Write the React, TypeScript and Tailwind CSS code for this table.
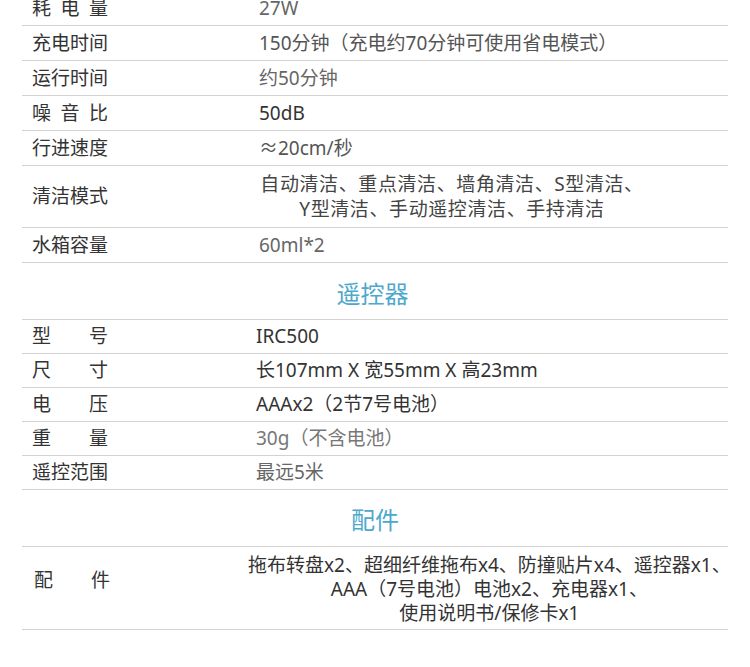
import React from 'react';

type Spec = {
  label: string[];
  value: React.ReactNode;
  tone: string;
  h: string;
};

const FONT = "font-['Noto_Sans','Noto_Sans_CJK_SC',sans-serif]";

const robotSpecs: Spec[] = [
  { label: ['耗', '电', '量'], value: '27W', tone: 'text-[#666]', h: 'h-[35px]' },
  { label: ['充电时间'], value: '150分钟（充电约70分钟可使用省电模式）', tone: 'text-[#555]', h: 'h-[35px]' },
  { label: ['运行时间'], value: '约50分钟', tone: 'text-[#666]', h: 'h-[35px]' },
  { label: ['噪', '音', '比'], value: '50dB', tone: 'text-[#333]', h: 'h-[35px]' },
  { label: ['行进速度'], value: '≈20cm/秒', tone: 'text-[#555]', h: 'h-[35px]' },
  {
    label: ['清洁模式'],
    value: (
      <div className="w-[386px] text-center leading-[25px] tracking-[0.6px]">
        自动清洁、重点清洁、墙角清洁、S型清洁、
        <br />
        Y型清洁、手动遥控清洁、手持清洁
      </div>
    ),
    tone: 'text-[#444]',
    h: 'h-[62px]',
  },
  { label: ['水箱容量'], value: '60ml*2', tone: 'text-[#666]', h: 'h-[35px]' },
];

const remoteSpecs: Spec[] = [
  { label: ['型', '号'], value: 'IRC500', tone: 'text-[#333]', h: 'h-[34px]' },
  { label: ['尺', '寸'], value: '长107mm X 宽55mm X 高23mm', tone: 'text-[#333]', h: 'h-[34px]' },
  { label: ['电', '压'], value: 'AAAx2（2节7号电池）', tone: 'text-[#333]', h: 'h-[34px]' },
  { label: ['重', '量'], value: '30g（不含电池）', tone: 'text-[#777]', h: 'h-[34px]' },
  { label: ['遥控范围'], value: '最远5米', tone: 'text-[#666]', h: 'h-[34px]' },
];

const Label: React.FC<{ parts: string[] }> = ({ parts }) => (
  <div className="w-[76px] flex justify-between text-[#333] shrink-0">
    {parts.map(p => <span key={p}>{p}</span>)}
  </div>
);

const SpecRow: React.FC<{ spec: Spec; labelCol: string }> = ({ spec, labelCol }) => (
  <div className={`flex items-center border-b border-[#d2d2d2] ${spec.h}`}>
    <div className={`${labelCol} pl-[10px] shrink-0`}>
      <Label parts={spec.label} />
    </div>
    <div className={`${spec.tone} whitespace-nowrap`}>{spec.value}</div>
  </div>
);

const Heading: React.FC<{ title: string; shift?: string }> = ({ title, shift = '' }) => (
  <div className={`h-[57px] flex items-center justify-center pt-[6px] text-[24px] text-[#4da8cd] border-b border-[#d2d2d2] ${shift}`}>
    {title}
  </div>
);

export default function App() {
  return (
    <div className={`w-[750px] h-[667px] overflow-hidden bg-white ${FONT} text-[19px]`}>
      <div className="mx-[22px] -mt-[9px]">
        {robotSpecs.map(s => (
          <SpecRow key={s.label.join('')} spec={s} labelCol="w-[237px]" />
        ))}
        <Heading title="遥控器" shift="pr-[5px]" />
        {remoteSpecs.map(s => (
          <SpecRow key={s.label.join('')} spec={s} labelCol="w-[234px]" />
        ))}
        <Heading title="配件" shift="pb-[3px] h-[56px]" />
        <div className="flex items-start h-[83px] border-b border-[#d2d2d2]">
          <div className="w-[226px] pl-[12px] pt-[19px] shrink-0">
            <Label parts={['配', '件']} />
          </div>
          <div className="flex-1 pt-[6px] text-center leading-[24px] text-[#333] whitespace-nowrap">
            拖布转盘x2、超细纤维拖布x4、防撞贴片x4、遥控器x1、
            <br />
            AAA（7号电池）电池x2、充电器x1、
            <br />
            使用说明书/保修卡x1
          </div>
        </div>
      </div>
    </div>
  );
}
